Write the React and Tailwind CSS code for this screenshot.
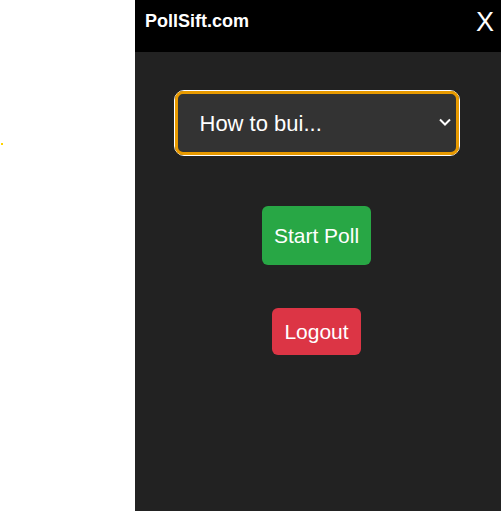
import React, { useState } from "react";

export default function App() {
  const [poll, setPoll] = useState("how");

  return (
    <div className="flex h-[511px] w-[501px] bg-white font-['Liberation_Sans',Arial,sans-serif]">
      <div className="relative w-[135px] shrink-0">
        <span className="absolute left-[1px] top-[143px] h-[2px] w-[2px] bg-[#ffd400]"></span>
      </div>
      <div className="flex flex-1 flex-col bg-[#222222]">
        <div className="flex h-[52px] items-start justify-between bg-black pl-[10px] pr-[7px]">
          <div className="pt-[11px] text-[18px] font-bold leading-[20px] text-white">PollSift.com</div>
          <button className="pt-[8px] text-[27px] leading-[28px] text-white">X</button>
        </div>
        <div className="flex flex-col items-center pr-[3px] pt-[38px]">
          <div className="relative h-[66px] w-[286px] rounded-[10px] border-[1.5px] border-white">
            <select
              value={poll}
              onChange={(e) => setPoll(e.target.value)}
              className="h-full w-full appearance-none rounded-[8px] border-[3px] border-[#e89a00] bg-[#333333] pl-[22px] text-[22px] text-white outline-none"
            >
              <option value="how">How to bui...</option>
            </select>
            <svg
              className="pointer-events-none absolute right-[8px] top-[27px]"
              width="12"
              height="8"
              viewBox="0 0 12 8"
              fill="none"
              stroke="white"
              strokeWidth="2"
            >
              <path d="M1 1.5l5 5 5-5" />
            </svg>
          </div>
          <button className="mt-[50px] h-[59px] rounded-[6px] bg-[#28a745] px-[12px] text-[21px] text-white">
            Start Poll
          </button>
          <button className="mt-[43px] h-[47px] rounded-[6px] bg-[#dc3545] px-[12px] text-[21px] text-white">
            Logout
          </button>
        </div>
      </div>
    </div>
  );
}
